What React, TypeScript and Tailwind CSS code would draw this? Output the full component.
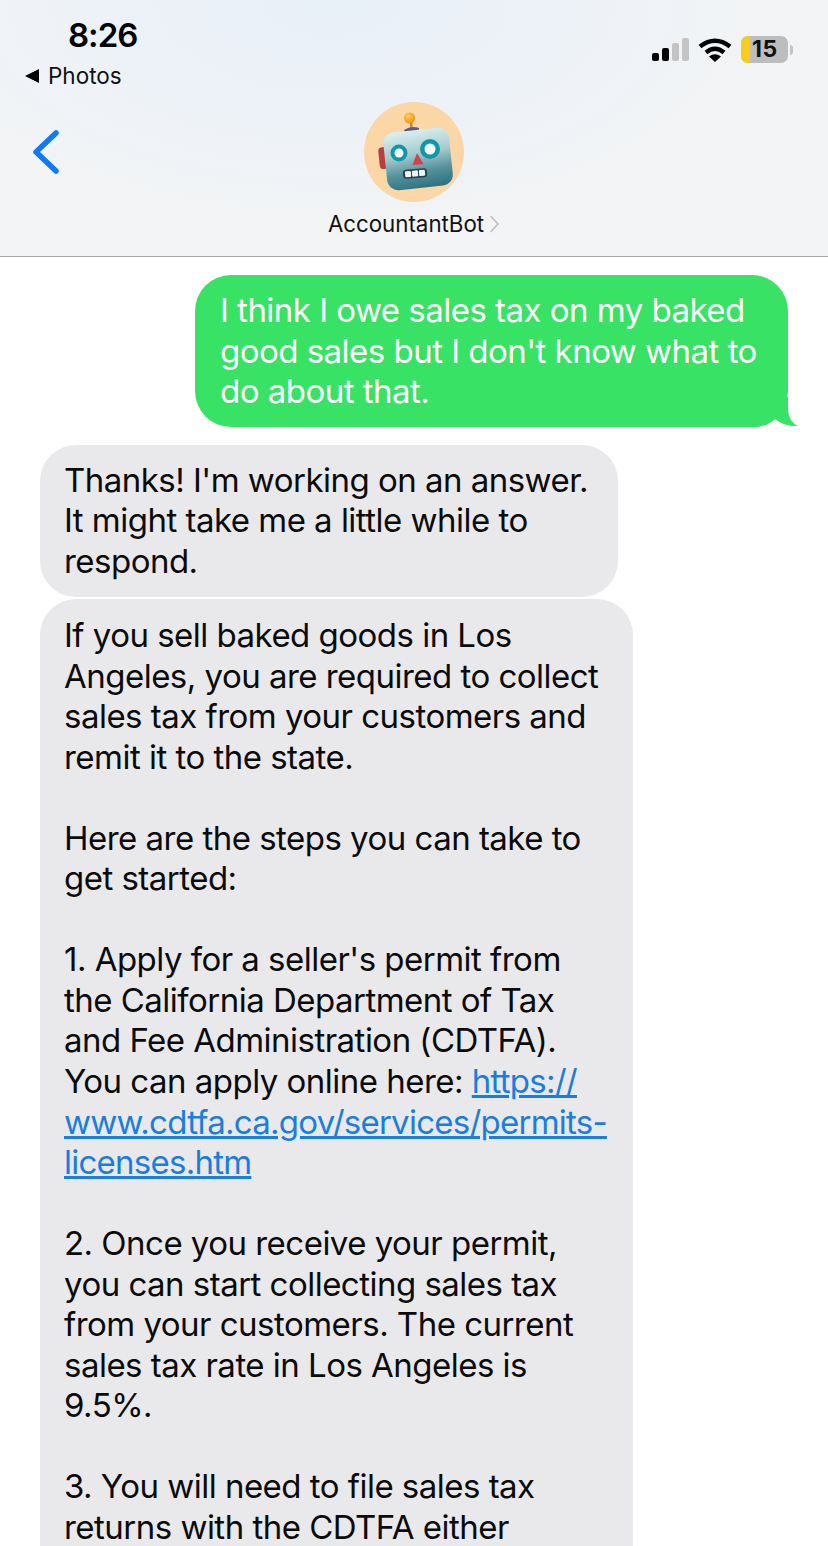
const lines1 = ["I think I owe sales tax on my baked", "good sales but I don't know what to", "do about that."];
const lines2 = ["Thanks! I'm working on an answer.", "It might take me a little while to", "respond."];

function RobotFace() {
  return (
    <svg width="100" height="100" viewBox="0 0 100 100">
      <defs>
        <linearGradient id="head" x1="0.45" y1="0" x2="0.55" y2="1">
          <stop offset="0" stopColor="#d8eeee" />
          <stop offset="0.4" stopColor="#a6cbce" />
          <stop offset="0.72" stopColor="#55919b" />
          <stop offset="1" stopColor="#2f7484" />
        </linearGradient>
        <radialGradient id="bulb" cx="0.4" cy="0.35" r="0.7">
          <stop offset="0" stopColor="#ffd24a" />
          <stop offset="1" stopColor="#f08a12" />
        </radialGradient>
      </defs>
      <circle cx="50" cy="50" r="50" fill="#fbd6a6" />
      <rect x="15" y="45" width="10" height="22" rx="4" fill="#b8403c" transform="rotate(-6 20 56)" />
      <rect x="46" y="18" width="2.5" height="8" fill="#c9873a" />
      <circle cx="45.5" cy="16" r="5.5" fill="url(#bulb)" />
      <path d="M40 28 Q47 23 55 26 Q56 31 47 32 Q41 32 40 28Z" fill="#5f5a80" />
      <rect x="21" y="28" width="66" height="58" rx="11" fill="url(#head)" transform="rotate(-6 54 56)" />
      <circle cx="35" cy="51" r="8.5" fill="#1297aa" />
      <circle cx="35" cy="51" r="4.5" fill="#f3fbfb" />
      <circle cx="66" cy="47" r="10" fill="#1297aa" />
      <circle cx="66" cy="47" r="5.5" fill="#f3fbfb" />
      <path d="M53 51 L59.5 62 L48.5 63 Z" fill="#d2424f" />
      <g transform="rotate(-5 51 71)">
        <rect x="39" y="67" width="24" height="9" rx="3" fill="#2a3d48" />
        <rect x="41" y="68.5" width="6" height="6" rx="1" fill="#eef4f4" />
        <rect x="48" y="68.5" width="6" height="6" rx="1" fill="#eef4f4" />
        <rect x="55" y="68.5" width="6" height="6" rx="1" fill="#eef4f4" />
      </g>
    </svg>
  );
}

function StatusIcons() {
  return (
    <div className="flex items-center">
      <svg width="38" height="24" viewBox="0 0 38 24" className="mr-[8px]">
        <rect x="0" y="15" width="7" height="8" rx="2" fill="#000" />
        <rect x="10" y="10" width="7" height="13" rx="2" fill="#000" />
        <rect x="20" y="5" width="7" height="18" rx="2" fill="#c4c4c4" />
        <rect x="30" y="0" width="7" height="23" rx="2" fill="#c4c4c4" />
      </svg>
      <svg width="34" height="24" viewBox="0 0 34 24" fill="none" stroke="#000" strokeWidth="4.4">
        <path d="M2 8.5 Q17 -3 32 8.5" />
        <path d="M8 14.5 Q17 7 26 14.5" />
        <path d="M17 24 L11 18.5 Q17 14 23 18.5 Z" fill="#000" stroke="none" />
      </svg>
      <div className="ml-[9px] flex h-[27px] w-[47px] overflow-hidden rounded-[7px] bg-[#bdbdbd]">
        <div className="h-full w-[9px] bg-[#f7cc1c]" />
        <span className="ml-[2px] text-[23px] leading-[27px] font-bold tracking-[0.5px] text-[#111]">15</span>
      </div>
      <div className="ml-[2px] h-[10px] w-[3px] rounded-r-full bg-[#c4c4c4]" />
    </div>
  );
}

function Header() {
  return (
    <header className="relative h-[257px] border-b border-[#a9a9ab] bg-[radial-gradient(ellipse_at_40%_0%,#e8f0f9,#f3f4f5_70%)]">
      <div className="flex items-start justify-between pt-[13px] pr-[35px] pl-[25px]">
        <div>
          <div className="pl-[43px] text-[33px] leading-[44px] font-semibold tracking-[-1px] text-black">8:26</div>
          <div className="mt-[4px] flex items-center text-[22.5px] leading-[30px] tracking-normal text-[#111]">
            <span className="mr-[9px] h-0 w-0 border-y-[7px] border-r-[14px] border-y-transparent border-r-black" />
            Photos
          </div>
        </div>
        <div className="pt-[23px]">
          <StatusIcons />
        </div>
      </div>
      <svg width="30" height="46" viewBox="0 0 30 46" className="absolute top-[129px] left-[31px]" fill="none" stroke="#0f7af5" strokeWidth="5.5" strokeLinecap="round" strokeLinejoin="round">
        <path d="M25 4 L5 23 L25 42" />
      </svg>
      <div className="absolute top-[102px] left-0 flex w-full flex-col items-center">
        <RobotFace />
        <div className="mt-[8px] flex items-center text-[22.3px] leading-[28px] tracking-normal text-[#111]">
          AccountantBot
          <svg width="11" height="18" viewBox="0 0 11 18" fill="none" stroke="#c0c0c4" strokeWidth="1.6" className="ml-[5px]">
            <path d="M1.5 1 L9 9 L1.5 17" />
          </svg>
        </div>
      </div>
    </header>
  );
}

export default function App() {
  return (
    <div className="h-[1546px] w-[828px] overflow-hidden bg-white font-['Inter','Noto_Sans',sans-serif] text-[33px] leading-[40.55px] tracking-[-0.52px] text-[#0b0b0b]">
      <Header />
      <main className="flex flex-col px-[40px] pt-[18px]">
        <div className="relative mb-[18px] self-end">
          <div className="w-[593px] rounded-[36px] bg-[#38e264] px-[25px] py-[15px] text-white">
            {lines1.map((l) => (
              <div key={l} className="whitespace-nowrap">{l}</div>
            ))}
          </div>
          <svg width="50" height="30" viewBox="0 0 50 30" className="absolute right-[-11px] bottom-0" fill="#38e264">
            <path d="M3 0 H39 V13 Q40 25 49 29 Q36 30 26 22 Q18 30 3 30 Z" />
          </svg>
        </div>
        <div className="mb-[2px] w-[578px] rounded-[36px] bg-[#e9e9eb] pt-[15px] pr-[25px] pb-[16px] pl-[24px]">
          {lines2.map((l) => (
            <div key={l} className="whitespace-nowrap">{l}</div>
          ))}
        </div>
        <div className="w-[593px] rounded-[36px] bg-[#e9e9eb] pt-[15.7px] pr-[25px] pb-[60px] pl-[24px] whitespace-nowrap">
          <p>If you sell baked goods in Los</p>
          <p>Angeles, you are required to collect</p>
          <p>sales tax from your customers and</p>
          <p>remit it to the state.</p>
          <p className="mt-[40.55px]">Here are the steps you can take to</p>
          <p>get started:</p>
          <p className="mt-[40.55px]">1. Apply for a seller's permit from</p>
          <p>the California Department of Tax</p>
          <p>and Fee Administration (CDTFA).</p>
          <p>You can apply online here: <a className="tracking-[-0.75px] text-[#1a7ee0] underline">https://</a></p>
          <p><a className="tracking-[-0.75px] text-[#1a7ee0] underline">www.cdtfa.ca.gov/services/permits-</a></p>
          <p><a className="tracking-[-0.75px] text-[#1a7ee0] underline">licenses.htm</a></p>
          <p className="mt-[40.55px]">2. Once you receive your permit,</p>
          <p>you can start collecting sales tax</p>
          <p>from your customers. The current</p>
          <p>sales tax rate in Los Angeles is</p>
          <p>9.5%.</p>
          <p className="mt-[40.55px]">3. You will need to file sales tax</p>
          <p>returns with the CDTFA either</p>
        </div>
      </main>
    </div>
  );
}
